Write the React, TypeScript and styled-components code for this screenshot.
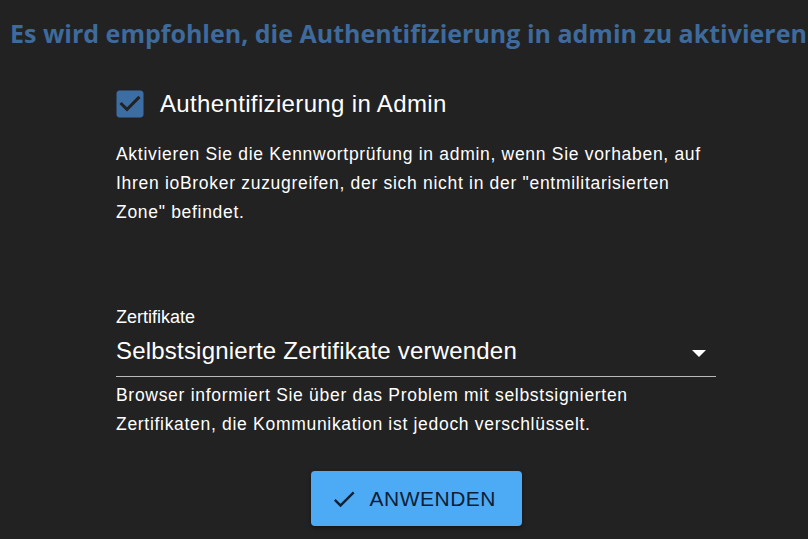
import styled, { createGlobalStyle } from "styled-components";

const Global = createGlobalStyle`
  html, body {
    margin: 0;
    padding: 0;
    background: #222222;
    overflow: hidden;
  }
  body {
    font-family: "Liberation Sans", Arial, sans-serif;
    color: #ffffff;
  }
`;

const Page = styled.div`
  width: 808px;
  height: 539px;
  display: flex;
  flex-direction: column;
  background: #222222;
  overflow: hidden;
`;

const Title = styled.h1`
  margin: 0;
  padding: 18px 0 0 10px;
  font-family: "Open Sans", "DejaVu Sans", sans-serif;
  font-size: 25px;
  font-weight: 700;
  line-height: 30px;
  color: #3e6a9c;
  white-space: nowrap;
`;

const Content = styled.div`
  width: 600px;
  margin: 0 0 0 116px;
  display: flex;
  flex-direction: column;
`;

const CheckRow = styled.label`
  display: flex;
  align-items: center;
  gap: 12px;
  height: 36px;
  margin-top: 38px;
  font-size: 24px;
  line-height: 28px;
  letter-spacing: 0.35px;

  svg {
    margin-left: -4px;
  }
`;

const Text = styled.p`
  margin: 18px 0 0;
  font-size: 17.5px;
  line-height: 29px;
  letter-spacing: 0.7px;
`;

const SelectBlock = styled.div`
  margin-top: 79px;
  display: flex;
  flex-direction: column;
`;

const SelectLabel = styled.div`
  font-size: 18px;
  line-height: 22px;
`;

const SelectField = styled.div`
  display: flex;
  align-items: center;
  justify-content: space-between;
  height: 45px;
  padding: 0 10px 3px 0;
  border-bottom: 1px solid #b9b9b9;
  font-size: 24px;
  letter-spacing: 0.2px;

  svg {
    margin-top: 6px;
  }
`;

const Helper = styled.p`
  margin: 4px 0 0;
  font-size: 17.5px;
  line-height: 29px;
  letter-spacing: 0.7px;
`;

const ButtonRow = styled.div`
  display: flex;
  justify-content: center;
  margin-top: 32px;
`;

const Button = styled.button`
  width: 211px;
  height: 55px;
  padding: 0 0 0 19px;
  border: none;
  border-radius: 4px;
  background: #4dabf5;
  color: #0d2036;
  display: flex;
  align-items: center;
  justify-content: flex-start;
  gap: 12px;
  font-family: "Liberation Sans", Arial, sans-serif;
  font-size: 21px;
  letter-spacing: 0.5px;
  box-shadow: 0 2px 4px rgba(0, 0, 0, 0.4);
`;

export default function App() {
  return (
    <Page>
      <Global />
      <Title>Es wird empfohlen, die Authentifizierung in admin zu aktivieren</Title>
      <Content>
        <CheckRow>
          <svg width="36" height="36" viewBox="0 0 24 24">
            <path
              d="M19 3H5c-1.11 0-2 .9-2 2v14c0 1.1.89 2 2 2h14c1.11 0 2-.9 2-2V5c0-1.1-.89-2-2-2zm-9 14l-5-5 1.41-1.41L10 14.17l7.59-7.59L19 8l-9 9z"
              fill="#3c6ea3"
            />
          </svg>
          Authentifizierung in Admin
        </CheckRow>
        <Text>
          Aktivieren Sie die Kennwortprüfung in admin, wenn Sie vorhaben, auf Ihren ioBroker
          zuzugreifen, der sich nicht in der "entmilitarisierten Zone" befindet.
        </Text>
        <SelectBlock>
          <SelectLabel>Zertifikate</SelectLabel>
          <SelectField>
            Selbstsignierte Zertifikate verwenden
            <svg width="14" height="7" viewBox="0 0 14 7">
              <path d="M0 0h14L7 7z" fill="#ffffff" />
            </svg>
          </SelectField>
          <Helper>
            Browser informiert Sie über das Problem mit selbstsignierten Zertifikaten, die
            Kommunikation ist jedoch verschlüsselt.
          </Helper>
        </SelectBlock>
        <ButtonRow>
          <Button>
            <svg width="28" height="28" viewBox="0 0 24 24">
              <path d="M9 16.17L4.83 12l-1.42 1.41L9 19 21 7l-1.41-1.41z" fill="#0d2036" />
            </svg>
            ANWENDEN
          </Button>
        </ButtonRow>
      </Content>
    </Page>
  );
}
